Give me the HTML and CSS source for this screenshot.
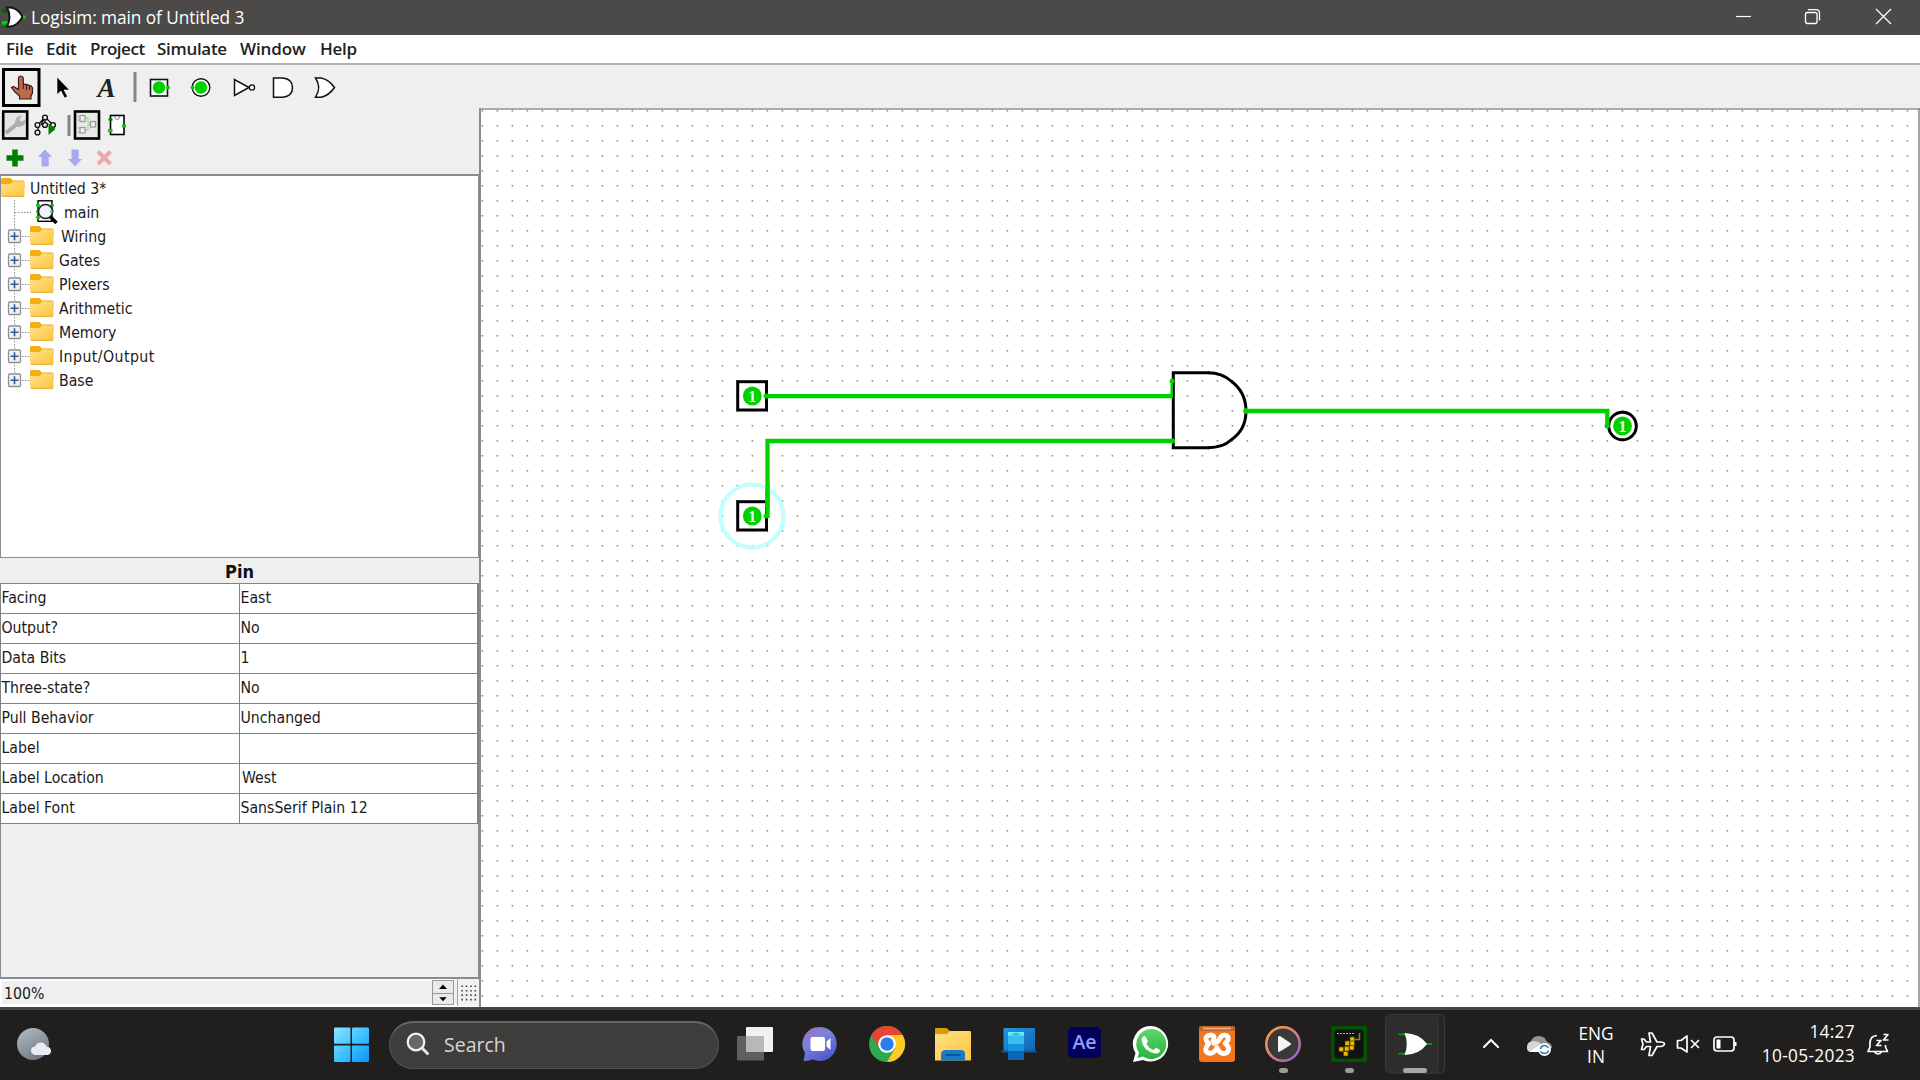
FILE: index.html
```html
<!DOCTYPE html>
<html lang="en">
<head>
<meta charset="utf-8">
<title>Logisim: main of Untitled 3</title>
<link rel="stylesheet" href="styles.css">
</head>
<body>
<svg class="defs" width="0" height="0" aria-hidden="true">
  <defs>
    <linearGradient id="fold" x1="0" y1="0" x2="1" y2="1"><stop offset="0" stop-color="#ffe08a"/><stop offset="1" stop-color="#fdc63c"/></linearGradient>
    <linearGradient id="win" gradientUnits="userSpaceOnUse" x1="334" y1="1027" x2="369" y2="1062"><stop offset="0" stop-color="#8fe3ff"/><stop offset=".5" stop-color="#3fc4ff"/><stop offset="1" stop-color="#0a95fb"/></linearGradient>
    <linearGradient id="moon" x1="0" y1="0" x2=".6" y2="1"><stop offset="0" stop-color="#b4bfc9"/><stop offset="1" stop-color="#727a83"/></linearGradient>
    <linearGradient id="chat" x1="0" y1="0" x2=".6" y2="1"><stop offset="0" stop-color="#a06aa8"/><stop offset=".45" stop-color="#7a84e0"/><stop offset="1" stop-color="#5458cc"/></linearGradient>
    <linearGradient id="ring" x1="0" y1="0" x2="1" y2="1"><stop offset="0" stop-color="#ff9d3c"/><stop offset=".5" stop-color="#e08080"/><stop offset="1" stop-color="#7b5fd0"/></linearGradient>
    <linearGradient id="wa" x1="0" y1="0" x2="0" y2="1"><stop offset="0" stop-color="#60d66a"/><stop offset="1" stop-color="#25b43e"/></linearGradient>
    <linearGradient id="blue" x1="0" y1="0" x2="1" y2="1"><stop offset="0" stop-color="#2199dc"/><stop offset="1" stop-color="#1063b0"/></linearGradient>
    <symbol id="folder" viewBox="0 0 24 20"><path d="M0 1.500Q0 0 1.500 0H9.500L12 2.500H22.500Q23.500 2.500 23.500 4V10H0Z" fill="#f5ae0b"/><path d="M0 6H9.500L12 3.500H23.500V17.500Q23.500 18.500 22.500 18.500H1Q0 18.500 0 17.500Z" fill="url(#fold)"/><path d="M1 18.300H23" stroke="#e3a52c"/></symbol>
    <symbol id="expander" viewBox="0 0 30 24"><path d="M14.500 0V24M22 12.500H30" stroke="#888" stroke-dasharray="1.500 1.500"/><rect x="8.500" y="6" width="12" height="12.500" rx="1" fill="#f3f3f1" stroke="#8f8f8f" stroke-width="1.300"/><path d="M10.500 12.300H18.500M14.500 8.300V16.300" stroke="#3b55a5" stroke-width="1.600"/></symbol>
    <symbol id="expander-last" viewBox="0 0 30 24"><path d="M14.500 0V8M22 12.500H30" stroke="#888" stroke-dasharray="1.500 1.500"/><rect x="8.500" y="6" width="12" height="12.500" rx="1" fill="#f3f3f1" stroke="#8f8f8f" stroke-width="1.300"/><path d="M10.500 12.300H18.500M14.500 8.300V16.300" stroke="#3b55a5" stroke-width="1.600"/></symbol>
  </defs>
</svg>

<div class="screen">
  <header class="titlebar">
    <svg width="28" height="35" viewBox="0 0 28 35"><path d="M2 11H10" stroke="#005c00" stroke-width="3"/><path d="M2 23H10" stroke="#00d400" stroke-width="3.500"/><path d="M7 7.500H11Q19 9 22.500 17Q18 25 11 26.500H7Q12 17 7 7.500Z" fill="#fff" stroke="#151515" stroke-width="2"/><rect x="23" y="15.500" width="3" height="3" fill="#00c800"/></svg>
    <h1 class="title">Logisim: main of Untitled 3</h1>
    <div class="caption-buttons">
      <svg width="70" height="35" viewBox="1708 0 70 35"><path d="M1736 16.500H1751" stroke="#fff" stroke-width="1.200"/></svg>
      <svg width="70" height="35" viewBox="1778 0 70 35" fill="none" stroke="#fff" stroke-width="1.300"><rect x="1805.500" y="12.500" width="11.500" height="11" rx="2"/><path d="M1808 9.700H1816Q1819.500 9.700 1819.500 13V20.500"/></svg>
      <svg width="72" height="35" viewBox="1848 0 72 35"><path d="M1876 9L1891 24M1891 9L1876 24" stroke="#fff" stroke-width="1.300"/></svg>
    </div>
  </header>

  <nav class="menubar"><span class="m-file">File</span><span class="m-edit">Edit</span><span class="m-project">Project</span><span class="m-simulate">Simulate</span><span class="m-window">Window</span><span class="m-help">Help</span></nav>

  <div class="toolbar">
    <svg width="42" height="43" viewBox="0 65 42 43"><rect x="3.500" y="69.500" width="35.500" height="36" fill="#efefef" stroke="#000" stroke-width="3"/><path d="M19.500 99V96L15 92L11.500 87.500L13.500 86.500L18.500 89.500V78Q19 76 21 76Q23 76 23.300 78V85Q24 83.500 26 84.500Q27.500 84 28.500 85.500Q30.500 85 32.500 87.500V93L31 96V99Z" fill="#b96a50" stroke="#3c1e14" stroke-width="1.200"/><path d="M23.300 85V89M26.500 85V90M29.500 86V90" stroke="#3c1e14"/></svg>
    <svg width="42" height="43" viewBox="42 65 42 43"><path d="M57 77V94.500L61 91L64.500 98L67.500 96.500L64 90H69.500Z" fill="#000" stroke="#fff" stroke-width=".6"/></svg>
    <span class="text-tool">A</span>
    <svg width="13" height="43" viewBox="126 65 13 43"><path d="M135 72V102" stroke="#858585" stroke-width="3"/></svg>
    <svg width="42" height="43" viewBox="139 65 42 43"><rect x="150.500" y="79.500" width="17" height="16.500" fill="#fff" stroke="#111" stroke-width="1.600"/><circle cx="159" cy="87.500" r="6.200" fill="#00d200"/><circle cx="168" cy="87.500" r="2" fill="#00d200"/></svg>
    <svg width="42" height="43" viewBox="181 65 42 43"><circle cx="201" cy="87.500" r="8.800" fill="#fff" stroke="#111" stroke-width="1.400"/><circle cx="201" cy="87.500" r="6.200" fill="#00d200"/><circle cx="192.500" cy="87.500" r="2" fill="#00d200"/></svg>
    <svg width="42" height="43" viewBox="223 65 42 43"><path d="M234.500 79.500V95.500L249 87.500Z" fill="#fff" stroke="#111" stroke-width="1.500"/><circle cx="252" cy="87.500" r="2.600" fill="#fff" stroke="#111" stroke-width="1.300"/></svg>
    <svg width="42" height="43" viewBox="265 65 42 43"><path d="M273.500 78H283Q292.500 79 292.500 87.500Q292.500 96 283 97.200H273.500Z" fill="#fff" stroke="#111" stroke-width="1.500"/></svg>
    <svg width="42" height="43" viewBox="307 65 42 43"><path d="M315.500 78H321Q329 79.500 334.500 87.500Q329 95.500 321 97.200H315.500Q322 87.500 315.500 78Z" fill="#fff" stroke="#111" stroke-width="1.500"/></svg>
  </div>

  <main class="workspace">
    <aside class="sidebar">
      <div class="minibar">
        <svg width="30" height="33" viewBox="0 109 30 33"><rect x="3.200" y="111.500" width="24" height="27" fill="#e5e5e5" stroke="#000" stroke-width="2.600"/><path d="M6 133L17 124" stroke="#aaa" stroke-width="4"/><path d="M15 124Q14 116 22 115.500L19.500 119.500L21.500 122L26 119Q26 127 17.500 127Z" fill="#b0b0b0"/></svg>
        <svg width="30" height="33" viewBox="30 109 30 33"><path d="M45 117L38 125V133M45 117V125M45 117L53 125M45 117L41 125" stroke="#111" fill="none" stroke-width="1.300"/><g fill="#f3f3f3" stroke="#111" stroke-width="1.400"><circle cx="45" cy="117.500" r="2.400"/><circle cx="37.500" cy="125" r="2.400"/><circle cx="37.500" cy="132.500" r="2.400"/><circle cx="45" cy="125" r="2.400"/><circle cx="53" cy="125" r="2.400"/></g><path d="M48.500 123L55.500 129L48.500 135Z" fill="#007c00"/></svg>
        <svg width="12" height="33" viewBox="60 109 12 33"><path d="M69 115V136" stroke="#858585" stroke-width="3"/></svg>
        <svg width="30" height="33" viewBox="72 109 30 33"><rect x="75" y="111.500" width="24" height="27" fill="#e8e8e8" stroke="#000" stroke-width="2.600"/><path d="M77 116.500H80M77 120H80M77 128H80M77 132H80M85 118H88V123H91M85 130H88V125H91M95 124H98" stroke="#84d884" fill="none"/><g fill="#eee" stroke="#999" stroke-width="1.200"><rect x="80" y="115.500" width="5" height="6"/><rect x="80" y="127.500" width="5" height="5.500"/><rect x="90.500" y="121.500" width="5" height="5.500"/></g></svg>
        <svg width="30" height="33" viewBox="102 109 30 33"><rect x="110.500" y="115.500" width="13.500" height="19" fill="#fff" stroke="#000" stroke-width="1.600"/><path d="M114.500 116Q115 119.500 117 119.500Q119.500 119.500 120 116" fill="none" stroke="#888"/><path d="M108.500 119.500H112.500" stroke="#008000" stroke-width="2.500"/><path d="M108 130.500H112.500M122 126H126" stroke="#00d000" stroke-width="2.800"/></svg>
      </div>
      <div class="minibar actions">
        <svg width="30" height="32" viewBox="0 142 30 32"><path d="M15 149.500V166.500M6.500 158H23.500" stroke="#007c00" stroke-width="5.500"/></svg>
        <svg width="30" height="32" viewBox="30 142 30 32"><path d="M45 149.500L52 157H48.700V166.500H41.500V157H38Z" fill="#a9a9ee"/></svg>
        <svg width="30" height="32" viewBox="60 142 30 32"><path d="M75 166.500L82 159H78.700V149.500H71.500V159H68Z" fill="#a9a9ee"/></svg>
        <svg width="30" height="32" viewBox="90 142 30 32"><path d="M98 151.500L110.500 164M110.500 151.500L98 164" stroke="#eeaaa9" stroke-width="4"/></svg>
      </div>

      <div class="tree">
        <div class="node root"><svg width="24" height="20"><use href="#folder"/></svg><span>Untitled 3*</span></div>
        <div class="node main"><svg width="64" height="24" viewBox="0 200 64 24"><path d="M14.500 200V224M15 212.500H31" stroke="#888" stroke-dasharray="1.500 1.500"/><rect x="38" y="200.800" width="14" height="20.500" fill="#fff" stroke="#000" stroke-width="1.400"/><path d="M36 205.500H40M36 211.500H40M36 217.500H40M50 205.500H54" stroke="#00c800" stroke-width="2"/><circle cx="45.500" cy="211.500" r="7" fill="#f0f0ff" stroke="#222" stroke-width="1.500"/><path d="M50.500 217L56.500 223" stroke="#000" stroke-width="3.500"/><path d="M36.500 205.500H40M36.500 217.500H40M50.500 211.500H54" stroke="#00d800" stroke-width="2"/></svg><span>main</span></div>
        <div class="node wiring"><svg width="30" height="24"><use href="#expander"/></svg><svg width="24" height="20"><use href="#folder"/></svg><span>Wiring</span></div>
        <div class="node"><svg width="30" height="24"><use href="#expander"/></svg><svg width="24" height="20"><use href="#folder"/></svg><span>Gates</span></div>
        <div class="node"><svg width="30" height="24"><use href="#expander"/></svg><svg width="24" height="20"><use href="#folder"/></svg><span>Plexers</span></div>
        <div class="node"><svg width="30" height="24"><use href="#expander"/></svg><svg width="24" height="20"><use href="#folder"/></svg><span>Arithmetic</span></div>
        <div class="node"><svg width="30" height="24"><use href="#expander"/></svg><svg width="24" height="20"><use href="#folder"/></svg><span>Memory</span></div>
        <div class="node io"><svg width="30" height="24"><use href="#expander"/></svg><svg width="24" height="20"><use href="#folder"/></svg><span>Input/Output</span></div>
        <div class="node"><svg width="30" height="24"><use href="#expander-last"/></svg><svg width="24" height="20"><use href="#folder"/></svg><span>Base</span></div>
      </div>

      <h2 class="attr-title">Pin</h2>
      <div class="attrs">
        <div class="cell">Facing</div><div class="cell">East</div>
        <div class="cell">Output?</div><div class="cell">No</div>
        <div class="cell">Data Bits</div><div class="cell">1</div>
        <div class="cell">Three-state?</div><div class="cell">No</div>
        <div class="cell">Pull Behavior</div><div class="cell">Unchanged</div>
        <div class="cell">Label</div><div class="cell"></div>
        <div class="cell">Label Location</div><div class="cell west">West</div>
        <div class="cell">Label Font</div><div class="cell">SansSerif Plain 12</div>
      </div>
      <div class="attr-space"></div>
      <div class="zoombar">
        <span class="zoom-value">100%</span>
        <div class="spinner"><svg width="20" height="12" viewBox="0 0 20 12"><path d="M6 8L10 3.500L14 8Z"/></svg><svg width="20" height="12" viewBox="0 0 20 12"><path d="M6 3.500L10 8L14 3.500Z"/></svg></div>
        <svg class="grid-toggle" width="22" height="27" viewBox="457 980 22 27"><path d="M460.500 987H477M460.500 991.700H477M460.500 996.300H477M460.500 1001H477" stroke="#444" stroke-width="1.700" stroke-dasharray="1.700 2.900"/></svg>
      </div>
    </aside>

    <svg class="canvas" width="1439" height="899" viewBox="481 108 1439 899">
      <defs><pattern id="dots" patternUnits="userSpaceOnUse" x="706" y="365" width="15" height="15"><rect x=".6" y="0" width="1.600" height="1.600" fill="#8f8f8f"/></pattern></defs>
      <rect x="481" y="108" width="1439" height="899" fill="#fff"/>
      <rect x="481" y="108" width="1437" height="899" fill="url(#dots)"/>
      <path d="M481 109H1920M1919 108V1007" stroke="#8b9099" stroke-width="1.600"/>
      <g fill="none" stroke="#000" stroke-width="3">
        <path d="M1209 372.800H1173.300V447.700H1209"/>
        <path d="M1208 372.800Q1222 373 1231 381Q1246 392 1246 411Q1246 430 1231 440Q1223 447.700 1208 447.700"/>
        <rect x="737.700" y="381.700" width="28.800" height="28.300"/>
        <rect x="737.700" y="501.700" width="28.800" height="28.300"/>
        <circle cx="1622.500" cy="426" r="13.800"/>
      </g>
      <g fill="none" stroke="#00d200" stroke-width="4.300">
        <path d="M766 396.200H1173"/><path d="M1171.700 396V381" stroke-width="2.500"/>
        <path d="M767.500 518V441H1173"/>
        <path d="M1246 411H1607.300V428"/>
      </g>
      <g fill="#00d200"><circle cx="752.300" cy="396" r="9.400"/><circle cx="752.300" cy="516" r="9.400"/><circle cx="1622.500" cy="426" r="9.400"/><circle cx="766" cy="396" r="2.500"/><circle cx="766" cy="516" r="2.500"/><circle cx="1172" cy="381" r="2.500"/><circle cx="1172.500" cy="441" r="2.500"/><circle cx="1246" cy="411" r="2.800"/><circle cx="1607" cy="426" r="2.500"/></g>
      <circle cx="752" cy="516" r="31.500" fill="none" stroke="#bfffff" stroke-width="4"/>
      <path d="M767.500 507V485" stroke="#00d200" stroke-width="4.300"/>
      <g class="pin-value"><text x="752.300" y="401.500">1</text><text x="752.300" y="521.500">1</text><text x="1622.500" y="431.500">1</text></g>
    </svg>
  </main>

  <footer class="taskbar">
    <svg width="60" height="70" viewBox="0 1010 60 70"><circle cx="33" cy="1044" r="16" fill="url(#moon)"/><path d="M35 1055Q31 1054 31 1050.500Q31 1047 35 1046.500Q37 1042 41.500 1042.500Q45 1043 46.500 1046.500Q51 1047 51 1051Q51 1054.500 47.500 1055Z" fill="#e8edf1"/></svg>
    <svg class="start" width="60" height="70" viewBox="324 1010 60 70" fill="url(#win)"><rect x="334" y="1027.500" width="16.500" height="16.300" rx="1"/><rect x="352" y="1027.500" width="17" height="16.300" rx="1"/><rect x="334" y="1045.500" width="16.500" height="16.500" rx="1"/><rect x="352" y="1045.500" width="17" height="16.500" rx="1"/></svg>
    <div class="search"><svg width="24" height="24" viewBox="0 0 24 24"><circle cx="10" cy="10" r="8.300" fill="#686868" stroke="#f0f3f5" stroke-width="2.200"/><path d="M16 16L21.500 21.500" stroke="#e3e8ec" stroke-width="3" stroke-linecap="round"/></svg><span>Search</span></div>
    <div class="apps">
      <svg viewBox="722 1010 66 70"><rect x="746" y="1027" width="27" height="25" rx="1" fill="#f1f1f1"/><rect x="737" y="1036" width="27" height="24.500" rx="1" fill="#606060"/><rect x="746" y="1036" width="18" height="16" fill="#b8b8b8"/></svg>
      <svg viewBox="788 1010 66 70"><path d="M820.300 1027A17 17 0 1 1 812.800 1059.500Q808 1061 803.500 1061L805 1053A17 17 0 0 1 820.300 1027Z" fill="url(#chat)"/><rect x="810.500" y="1037" width="14.500" height="14" rx="2" fill="#fff"/><path d="M830.500 1038V1050L826.500 1046.500V1041.500Z" fill="#fff"/></svg>
      <svg viewBox="854 1010 66 70"><circle cx="887" cy="1044" r="18" fill="#2da94f"/><path d="M871.400 1035A18 18 0 0 1 902.600 1035H887L879.500 1048.500Z" fill="#e84335"/><path d="M902.600 1035A18 18 0 0 1 887 1062L895 1048.500L887 1035Z" fill="#fdc922"/><circle cx="887" cy="1044" r="8.800" fill="#fff"/><circle cx="887" cy="1044" r="6.700" fill="#2b7cf0"/></svg>
      <svg viewBox="920 1010 66 70"><path d="M935 1029Q935 1028 936 1028H946.500L950 1031V1036H935Z" fill="#dc9c08"/><path d="M935 1034H947L950 1031H970Q971 1031 971 1032V1060.500H935Z" fill="url(#fold)"/><path d="M941 1060.500V1054Q941.500 1050 945.500 1050H960.500Q965 1050 965 1054V1060.500Z" fill="#167bc9"/><path d="M945.500 1055H960.500" stroke="#09549b" stroke-width="2"/></svg>
      <svg viewBox="986 1010 66 70"><rect x="1003.500" y="1028" width="31.500" height="24" rx="1" fill="url(#blue)"/><path d="M1001.500 1050.500H1036.500V1052.500H1001.500Z" fill="#0c589e"/><rect x="1008" y="1032" width="16" height="27.500" rx="1" fill="#38bdf0"/><rect x="1008" y="1032" width="16" height="3.500" fill="#65e9ff"/><rect x="1008" y="1044" width="16" height="7" fill="#1693db"/><rect x="1008" y="1051" width="16" height="8.500" fill="#0b66b4"/><path d="M1013 1034H1019" stroke="#148bb1"/></svg>
      <div class="ae"><span>Ae</span></div>
      <svg viewBox="1118 1010 66 70"><path d="M1151 1026A17.800 17.800 0 1 1 1143 1060L1133 1062L1135.500 1053A17.800 17.800 0 0 1 1151 1026Z" fill="#fff"/><path d="M1151 1029A15 15 0 1 1 1143 1056.500L1137.500 1058L1139 1052.500A15 15 0 0 1 1151 1029Z" fill="url(#wa)"/><path d="M1145 1036L1148 1041L1146.500 1044Q1149 1048.500 1153.500 1050L1156 1047.500L1160 1050Q1160 1054 1155 1053.500Q1143 1051 1141.500 1040Q1142 1036 1145 1036Z" fill="#fff"/></svg>
      <svg viewBox="1184 1010 66 70"><rect x="1199" y="1026" width="36" height="36" rx="3" fill="#f47521"/><rect x="1199" y="1026" width="36" height="5" rx="2" fill="#b9652a"/><path d="M1203 1028.500H1231" stroke="#f1a87b" stroke-width="2"/><path d="M1213 1040.500Q1216 1036 1211.500 1035.200Q1205.500 1035 1206 1039.500Q1206.500 1042 1209 1043.500Q1205 1047 1206 1051Q1208.500 1054.500 1213 1052.500Q1216 1050.500 1217 1047.500Q1219 1053 1223 1053.500Q1228.500 1053.500 1228.500 1049Q1228.500 1045.500 1225 1043.500Q1229 1040.500 1228 1037Q1226.500 1034.500 1222.500 1035.500Q1220.500 1036.500 1219 1040Q1217 1043 1214 1043.500" fill="none" stroke="#fff" stroke-width="4.800" stroke-linecap="round" stroke-linejoin="round"/></svg>
      <svg viewBox="1250 1010 66 70"><circle cx="1283" cy="1044" r="16.700" fill="#393939" stroke="url(#ring)" stroke-width="2.600"/><path d="M1278 1037V1051Q1278.500 1052.500 1280 1051.500L1290.500 1045Q1291.500 1044 1290.500 1043L1280 1036Q1278.500 1035.500 1278 1037Z" fill="#f3f3f3"/><rect x="1279" y="1068" width="9" height="5" rx="2.500" fill="#9b9b9b"/></svg>
      <svg viewBox="1316 1010 66 70"><rect x="1331" y="1026" width="36" height="36" fill="#005400"/><rect x="1334.500" y="1029.500" width="29" height="29" rx="4" fill="#111"/><path d="M1337 1033.500H1355" stroke="#aaa" stroke-dasharray="2 1"/><path d="M1359.500 1033V1039.500H1355" stroke="#a87a00" fill="none" stroke-width="1.500"/><g fill="#edb900" stroke="#4d3e00" stroke-width=".7"><rect x="1350" y="1037" width="4.500" height="4.500"/><rect x="1345" y="1041" width="4.500" height="4.500"/><rect x="1350" y="1041" width="4.500" height="4.500"/><rect x="1339" y="1047" width="4.500" height="4.500"/><rect x="1344.500" y="1046.500" width="4.500" height="4.500"/><rect x="1349.500" y="1045.500" width="4.500" height="4.500"/><rect x="1343.500" y="1051.500" width="4.500" height="4.500"/></g><rect x="1345" y="1068" width="9" height="5" rx="2.500" fill="#9b9b9b"/></svg>
      <svg viewBox="1382 1010 66 70"><rect x="1392" y="1014.500" width="52.500" height="58.500" rx="5" fill="#262524" stroke="#3b3a39"/><rect x="1385.500" y="1014.500" width="52.500" height="58.500" rx="5" fill="#2e2d2c" stroke="#3b3a39"/><path d="M1398.500 1034.300H1406M1398.500 1053.700H1406M1426 1044H1432" stroke="#009c00" stroke-width="1.800"/><path d="M1404.500 1033Q1420 1033.500 1427 1044Q1419 1055 1404.500 1055Q1409 1044 1404.500 1033Z" fill="#fff"/><rect x="1403" y="1068" width="24" height="5" rx="2.500" fill="#a8a7a6"/></svg>
    </div>
    <div class="tray">
      <svg class="chevron" width="30" height="70" viewBox="1476 1010 30 70"><path d="M1484 1047L1491 1040L1498 1047" fill="none" stroke="#fff" stroke-width="2" stroke-linecap="round"/></svg>
      <svg class="cloud" width="34" height="70" viewBox="1522 1010 34 70"><path d="M1530 1045Q1531 1036 1539 1036Q1545 1036 1547 1042Q1552 1043 1552 1048L1530 1051Z" fill="#929292"/><path d="M1530 1052Q1526.500 1051 1527 1047Q1527 1041 1534 1041Q1541 1041 1542 1047V1052Z" fill="#d6d6d6"/><path d="M1529 1052L1541 1044V1052Z" fill="#fff"/><circle cx="1544.500" cy="1049.500" r="6.500" fill="#fff"/><path d="M1540.500 1049Q1541 1045.500 1544.500 1045.500Q1547 1045.500 1548.500 1048M1548.500 1050.500Q1548 1053.500 1544.500 1053.500Q1542 1053.500 1540.500 1051.500" fill="none" stroke="#1976c8" stroke-width="1.400"/></svg>
      <div class="lang"><span>ENG</span><span>IN</span></div>
      <svg class="status" width="110" height="70" viewBox="1636 1010 110 70" fill="none" stroke="#fff" stroke-width="1.700" stroke-linejoin="round"><path d="M1641.500 1039H1644L1646.500 1042H1650.500L1649 1033H1652L1657 1042H1661.500Q1664.500 1042.500 1664.500 1044Q1664 1046 1661.500 1046.500H1657L1652 1055.500H1649L1650.500 1046.500H1646.500L1644 1049.500H1641.500L1643 1044Z"/><path d="M1677.500 1040.500H1681L1687 1036V1052L1681 1048H1677.500Z"/><path d="M1691 1040L1699 1048M1699 1040L1691 1048"/><rect x="1714" y="1037" width="20" height="14" rx="3"/><path d="M1735 1042V1046" stroke-width="3"/><rect x="1716.500" y="1039.500" width="4" height="9" fill="#fff" stroke="none"/></svg>
      <div class="clock"><span class="time">14:27</span><span>10-05-2023</span></div>
      <svg width="40" height="70" viewBox="1859 1010 40 70" fill="none" stroke="#fff" stroke-width="1.700" stroke-linejoin="round"><path d="M1877 1035.500Q1870 1036 1870 1043V1047L1868 1051.500H1887.500L1885.500 1047V1045M1874.500 1052Q1878 1056 1881.500 1052M1876.500 1040.500H1881L1876.500 1045.500H1881.500M1883.500 1034.500H1888L1883.500 1040H1888.500"/></svg>
    </div>
  </footer>
</div>
</body>
</html>
```
FILE: styles.css
```css
* { box-sizing: border-box; }
body { margin: 0; overflow: hidden; background: #201f1e; }
svg { display: block; flex: none; }
.defs { position: absolute; }
.screen { width: 1920px; height: 1080px; display: flex; flex-direction: column; }

.titlebar { height: 35px; flex: none; background: #4b4a48; display: flex; align-items: center; color: #fff; }
.title { margin: 0 auto 0 3px; font: 400 17.3px/35px "Open Sans", sans-serif; letter-spacing: -.08px; }
.caption-buttons { display: flex; }

.menubar { height: 30px; flex: none; background: #fff; border-bottom: 2px solid #b1b3b5; display: flex; padding-left: 6px; font: 600 17px/28px "Open Sans", sans-serif; letter-spacing: -.3px; color: #222; }
.menubar span { white-space: nowrap; flex: none; }
.m-file { width: 40px; }
.m-edit { width: 44px; }
.m-project { width: 67px; letter-spacing: -.45px; }
.m-simulate { width: 83px; }
.m-window { width: 80px; letter-spacing: -.1px; }

.toolbar { height: 43px; flex: none; background: #efefef; display: flex; }
.text-tool { width: 42px; padding-left: 3px; text-align: center; font: italic 700 27px/46px "Liberation Serif", serif; color: #222; }

.workspace { height: 899px; flex: none; display: flex; background: #efefef; }
.sidebar { width: 481px; flex: none; display: flex; flex-direction: column; border-right: 2px solid #868b95; font: 400 15.7px/24px "DejaVu Sans Condensed", "DejaVu Sans", sans-serif; color: #1a1a1a; }
.minibar { height: 34px; padding-top: 1px; display: flex; }
.actions { height: 32px; padding: 0; }

.tree { height: 384px; background: #fff; border: 1px solid #878c96; border-top-width: 2px; }
.node { height: 24px; display: flex; align-items: center; margin-left: -1px; }
.node span { margin-left: 5px; padding-top: 2px; line-height: 24px; }
.node.root { padding-left: 1px; }
.node.main span { margin-left: 0; }
.node.wiring span { margin-left: 7px; }
.node.io span { letter-spacing: .45px; }

.attr-title { height: 25px; margin: 0; text-align: center; font: 700 18px/27px "DejaVu Sans Condensed", "DejaVu Sans", sans-serif; color: #111; }
.attrs { display: grid; grid-template-columns: 239px 239px; grid-auto-rows: 30px; width: 479px; border: 1px solid #808488; border-bottom: 0; border-right-width: 2px; background: #fff; }
.cell { border-right: 1px solid #808488; border-bottom: 1px solid #808488; padding-left: .5px; line-height: 28px; white-space: nowrap; }
.cell.west { padding-left: 2px; }
.attr-space { flex: 1; border: solid #878c96; border-width: 0 1px 2px 1px; }
.zoombar { height: 28px; flex: none; display: flex; align-items: center; background: #efefef; border: solid #fff; border-width: 2px 0 3px 2px; }
.zoom-value { flex: 1; padding: 3px 0 0 2px; }
.spinner { width: 22px; height: 25px; border: 1px solid #999; background: #eaeaea; flex: none; }
.spinner svg + svg { border-top: 1px solid #999; }
.grid-toggle { border-left: 1px solid #a0a3a8; margin-left: 3px; background: #f2f2f2; }
.pin-value { font: 700 16px "Liberation Serif", serif; fill: #e4ffe4; text-anchor: middle; }

.taskbar { height: 73px; flex: none; background: #201f1e; border-top: 3px solid #484746; display: flex; align-items: center; color: #fff; font: 400 17.3px/23px "Open Sans", sans-serif; }
.start { margin-left: 264px; }
.search { width: 330px; height: 48px; margin: 0 3px 1px 5px; border: 1px solid #555351; border-top: 2px solid #686664; border-radius: 24px; background: #403e3d; display: flex; align-items: center; padding: 0 0 2px 16px; color: #d7d5d3; font-size: 19.5px; }
.search span { margin-left: 14px; }
.apps { display: flex; height: 70px; }
.apps svg { width: 66px; height: 70px; }
.ae { width: 66px; padding: 17px 0 0 16px; }
.ae span { display: block; width: 33px; height: 31px; border-radius: 5px; background: #00005b; color: #9999ff; text-align: center; font: 600 19.5px/30px "Open Sans", sans-serif; }
.tray { display: flex; align-items: center; height: 70px; flex: 1; }
.chevron { margin-left: 28px; }
.cloud { margin-left: 16px; }
.lang { width: 80px; padding-bottom: 1px; text-align: center; display: flex; flex-direction: column; }
.clock { width: 109px; padding-bottom: 2px; text-align: right; display: flex; flex-direction: column; line-height: 24px; letter-spacing: .3px; }
.clock + svg { margin-left: 4px; }
```
